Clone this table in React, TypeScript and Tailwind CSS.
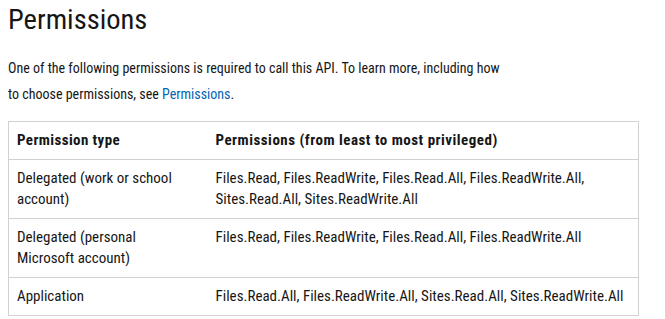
import React from "react";

const rows: [string, string][] = [
  ["Delegated (work or school account)", "Files.Read, Files.ReadWrite, Files.Read.All, Files.ReadWrite.All, Sites.Read.All, Sites.ReadWrite.All"],
  ["Delegated (personal Microsoft account)", "Files.Read, Files.ReadWrite, Files.Read.All, Files.ReadWrite.All"],
  ["Application", "Files.Read.All, Files.ReadWrite.All, Sites.Read.All, Sites.ReadWrite.All"],
];

export default function App() {
  return (
    <div className="w-[665px] h-[319px] bg-white text-[#161616] px-[8px] overflow-hidden font-['Roboto_Condensed','Roboto',sans-serif]">
      <h1 className="text-[28.5px] leading-[40px] font-normal">Permissions</h1>
      <p className="max-w-[505px] text-[14px] leading-[25.6px] mt-[16px]">
        One of the following permissions is required to call this API. To learn more, including how to choose permissions, see{" "}
        <a className="text-[#0065b3]">Permissions</a>.
      </p>
      <table className="mt-[14px] w-[631px] border-collapse border border-[#d1d1d1] text-[15px] leading-[21px]">
        <thead>
          <tr>
            <th className="w-[199px] text-left font-bold tracking-[0.4px] pl-[8px] pr-[24px] py-[8px] border-b border-[#d1d1d1]">Permission type</th>
            <th className="text-left font-bold tracking-[0.5px] px-[8px] py-[8px] border-b border-[#d1d1d1]">Permissions (from least to most privileged)</th>
          </tr>
        </thead>
        <tbody>
          {rows.map(([a, b]) => (
            <tr key={a}>
              <td className="align-top pl-[8px] pr-[24px] py-[8px] border-b border-[#d1d1d1]">{a}</td>
              <td className="align-top px-[8px] py-[8px] border-b border-[#d1d1d1]">{b}</td>
            </tr>
          ))}
        </tbody>
      </table>
    </div>
  );
}
